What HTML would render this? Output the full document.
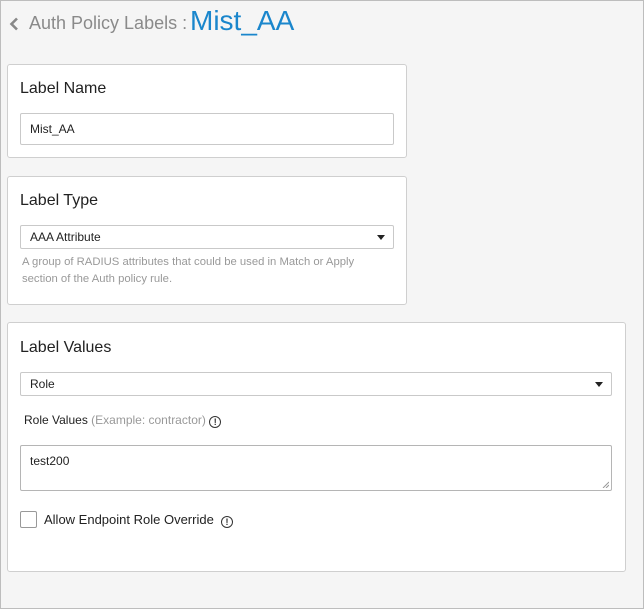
<!DOCTYPE html>
<html><head><meta charset="utf-8"><style>
*{box-sizing:border-box;margin:0;padding:0}
html,body{width:644px;height:609px;overflow:hidden}
body{background:#f5f5f5;font-family:"Liberation Sans","DejaVu Sans",sans-serif;color:#222;position:relative}
.a{position:absolute}
.card{position:absolute;background:#fff;border:1px solid #cfcfcf;border-radius:3px}
.h{position:absolute;font-size:16px;color:#222}
.inp{position:absolute;background:#fff;border:1px solid #c9c9c9;border-radius:2px;font-size:12px;color:#222;padding-left:9px;display:flex;align-items:center}
.caret{position:absolute;right:8px;top:50%;margin-top:-2px;width:0;height:0;border-left:4px solid transparent;border-right:4px solid transparent;border-top:5px solid #222}
.help{font-size:11.3px;color:#999;line-height:17px}
.info{display:inline-block;width:12px;height:12px;border:1.3px solid #333;border-radius:50%;font-size:9px;font-weight:bold;text-align:center;line-height:10px;vertical-align:-1px;color:#333}
</style></head><body>
<div class="a" style="left:0;top:0;width:644px;height:609px;border:1px solid #bdbdbd"></div>
<svg class="a" style="left:9px;top:17px" width="10" height="14" viewBox="0 0 10 14"><path d="M8 1.5 L2.5 7 L8 12.5" fill="none" stroke="#888" stroke-width="2.6"/></svg>
<div class="a" style="left:29px;top:13px;font-size:18px;color:#8a8a8a">Auth Policy Labels :</div>
<div class="a" style="left:190px;top:5px;font-size:28px;color:#1a86cc">Mist_AA</div>

<div class="card" style="left:7px;top:64px;width:400px;height:94px"></div>
<div class="h" style="left:20px;top:80px">Label Name</div>
<div class="inp" style="left:20px;top:113px;width:374px;height:32px">Mist_AA</div>

<div class="card" style="left:7px;top:176px;width:400px;height:129px"></div>
<div class="h" style="left:20px;top:192px">Label Type</div>
<div class="inp" style="left:20px;top:225px;width:374px;height:24px">AAA Attribute<span class="caret"></span></div>
<div class="a help" style="left:22px;top:254px">A group of RADIUS attributes that could be used in Match or Apply<br>section of the Auth policy rule.</div>

<div class="card" style="left:7px;top:322px;width:619px;height:250px"></div>
<div class="h" style="left:20px;top:339px">Label Values</div>
<div class="inp" style="left:20px;top:372px;width:592px;height:24px">Role<span class="caret"></span></div>
<div class="a" style="left:24px;top:413px;font-size:12px;color:#222">Role Values <span style="color:#999">(Example: contractor)</span> <span class="info">!</span></div>
<div class="inp" style="left:20px;top:445px;width:592px;height:46px;align-items:flex-start;padding-top:8px;border-color:#b5b5b5">test200
<svg class="a" style="right:2px;bottom:2px" width="7" height="7"><path d="M1 7L7 1M4 7L7 4" stroke="#999" stroke-width="1"/></svg></div>
<div class="a" style="left:20px;top:511px;width:17px;height:17px;border:1px solid #999;border-radius:2px;background:#fff"></div>
<div class="a" style="left:44px;top:512px;font-size:13px;color:#222">Allow Endpoint Role Override &nbsp;<span class="info">!</span></div>
</body></html>
